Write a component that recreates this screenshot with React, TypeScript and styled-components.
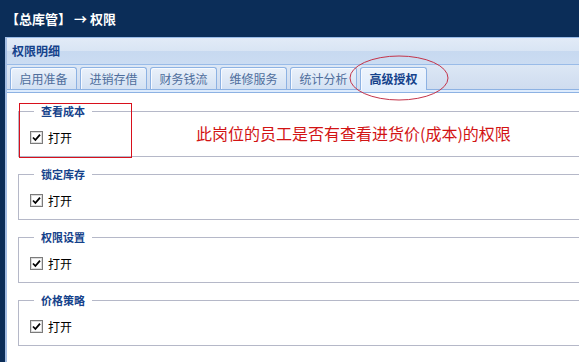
import React from 'react';
import styled, { createGlobalStyle } from 'styled-components';

const GlobalStyle = createGlobalStyle`
  html, body {
    margin: 0;
    padding: 0;
    background: #0b2d58;
    overflow: hidden;
  }
  body {
    font-family: "Noto Sans CJK SC", "Noto Sans", sans-serif;
  }
`;

const Screen = styled.div`
  position: relative;
  width: 579px;
  height: 362px;
  overflow: hidden;
  background: #0b2d58;
`;

const TitleBar = styled.div`
  height: 37px;
  line-height: 37px;
  padding-left: 6px;
  color: #ffffff;
  font-size: 13px;
  font-weight: bold;
`;

const Panel = styled.div`
  margin-left: 5px;
  width: 700px;
  height: 325px;
  border-left: 2px solid #a3bde3;
  background: #ffffff;
`;

const PanelHeader = styled.div`
  height: 26px;
  line-height: 26px;
  padding-left: 5px;
  border-top: 1px solid #99bbe8;
  background: linear-gradient(#e2ebf7 0%, #d9e5f4 48%, #c7d9f0 52%, #cbdcf2 100%);
  color: #15428b;
  font-size: 12px;
  font-weight: bold;
`;

const TabStrip = styled.div`
  display: flex;
  align-items: flex-end;
  height: 24px;
  padding-left: 3px;
  border-top: 1px solid #99bbe8;
  border-bottom: 1px solid #8db2e3;
  background: linear-gradient(#dce7f5, #cfdcef);
`;

const Tab = styled.div<{ $active?: boolean }>`
  box-sizing: border-box;
  width: 67px;
  height: ${({ $active }) => ($active ? '23px' : '22px')};
  margin-right: 3px;
  margin-bottom: ${({ $active }) => ($active ? '-1px' : '0')};
  border: 1px solid #8db2e3;
  border-bottom: none;
  border-radius: 3px 3px 0 0;
  background: ${({ $active }) =>
    $active ? 'linear-gradient(#eef4fc, #deecfd)' : 'linear-gradient(#eaf1fa, #d3e1f3)'};
  box-shadow: inset 1px 1px 0 #f7faff;
  text-align: center;
  line-height: 21px;
  font-size: 12px;
  font-weight: ${({ $active }) => ($active ? 'bold' : 'normal')};
  color: ${({ $active }) => ($active ? '#15428b' : '#4f6e9c')};
`;

const StripSpacer = styled.div`
  height: 2px;
  background: #deecfd;
  border-bottom: 1px solid #8db2e3;
`;

const Body = styled.div`
  padding: 11px 0 0 11px;
  display: flex;
  flex-direction: column;
  gap: 10px;
`;

const Group = styled.fieldset`
  margin: 0;
  padding: 0 10px 9px 11px;
  border: 1px solid #b5b8c8;
  min-width: 0;
`;

const Legend = styled.legend`
  margin-left: 4px;
  padding: 0 7px;
  line-height: 14px;
  font-size: 11px;
  font-weight: bold;
  color: #15428b;
`;

const Row = styled.label`
  display: flex;
  align-items: center;
  gap: 5px;
  height: 20px;
  margin-top: 9px;
  font-size: 12px;
  color: #000000;
`;

const Box = styled.span`
  box-sizing: border-box;
  width: 13px;
  height: 13px;
  border: 1px solid #7b7b7b;
  box-shadow: inset 0 0 0 1px #dcdcdc;
  background: #ffffff;
  display: flex;
  align-items: center;
  justify-content: center;
`;

const Note = styled.div`
  position: absolute;
  left: 196px;
  top: 123px;
  font-size: 16px;
  line-height: 20px;
  color: #d21414;
  white-space: nowrap;
`;

const Marks = styled.svg`
  position: absolute;
  left: 0;
  top: 0;
  pointer-events: none;
`;

const tabs = ['启用准备', '进销存借', '财务钱流', '维修服务', '统计分析', '高级授权'];
const groups = ['查看成本', '锁定库存', '权限设置', '价格策略'];

const Check = () => (
  <Box>
    <svg width="9" height="9" viewBox="0 0 9 9">
      <path d="M1 4.5 L3.4 7 L8 1.6" fill="none" stroke="#000" strokeWidth="1.8" />
    </svg>
  </Box>
);

export default function App() {
  return (
    <Screen>
      <GlobalStyle />
      <TitleBar>【总库管】 → 权限</TitleBar>
      <Panel>
        <PanelHeader>权限明细</PanelHeader>
        <TabStrip>
          {tabs.map((t, i) => (
            <Tab key={t} $active={i === tabs.length - 1}>{t}</Tab>
          ))}
        </TabStrip>
        <StripSpacer />
        <Body>
          {groups.map((g) => (
            <Group key={g}>
              <Legend>{g}</Legend>
              <Row>
                <Check />
                打开
              </Row>
            </Group>
          ))}
        </Body>
      </Panel>

      {/* annotations drawn over the screenshot */}
      <Marks width="579" height="362">
        <rect x="19.5" y="103.5" width="112" height="54" fill="none" stroke="#d8101c" strokeWidth="1" />
        <ellipse cx="399" cy="78" rx="49" ry="22" fill="none" stroke="#c4344a" strokeWidth="1" />
      </Marks>
      <Note>此岗位的员工是否有查看进货价(成本)的权限</Note>
    </Screen>
  );
}
